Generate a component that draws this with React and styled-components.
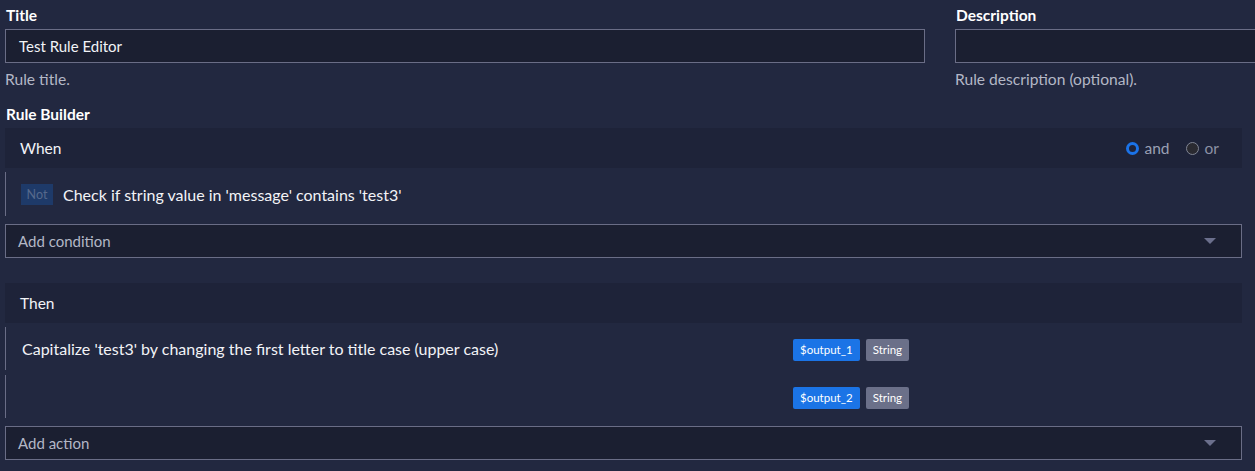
import styled, { createGlobalStyle } from "styled-components";

const GlobalStyle = createGlobalStyle`
  html, body {
    margin: 0;
    padding: 0;
    background: #222840;
    overflow: hidden;
  }
  body {
    font-family: "Lato", "Open Sans", sans-serif;
    color: #e8eaf0;
  }
`;

const Page = styled.div`
  width: 1255px;
  height: 471px;
  padding: 6px 13px 0 5px;
  box-sizing: border-box;
  overflow: hidden;
`;

const TopGrid = styled.div`
  display: grid;
  grid-template-columns: 920px 920px;
  column-gap: 30px;
`;

const Field = styled.div`
  display: flex;
  flex-direction: column;
`;

const Label = styled.div`
  font-size: 15.5px;
  font-weight: 700;
  line-height: 18px;
  margin-bottom: 5px;
  padding-left: 1px;
  color: #ffffff;
`;

const TextInput = styled.div`
  height: 34px;
  box-sizing: border-box;
  border: 1px solid #6a6d86;
  background: #1b1f31;
  padding: 0 13px;
  display: flex;
  align-items: center;
  font-size: 15px;
  color: #f2f3f7;
`;

const Help = styled.div`
  font-size: 15.6px;
  line-height: 18px;
  margin-top: 7px;
  color: #b3b7c6;
`;

const SectionLabel = styled(Label)`
  margin-top: 17px;
  margin-bottom: 5px;
`;

const Header = styled.div`
  height: 40px;
  background: #1e2339;
  display: flex;
  align-items: center;
  justify-content: space-between;
  padding: 0 23px 0 15px;
  font-size: 15.5px;
  color: #f2f3f7;
`;

const RadioGroup = styled.div`
  display: flex;
  align-items: center;
  gap: 16px;
`;

const RadioItem = styled.label`
  display: flex;
  align-items: center;
  gap: 6px;
  font-size: 15.5px;
  color: ${(p) => (p.checked ? "#9aa0b4" : "#8c91a5")};
`;

const RadioDot = styled.span`
  width: 13px;
  height: 13px;
  border-radius: 50%;
  box-sizing: border-box;
  background: ${(p) => (p.checked ? "#1e2339" : "#2a2a31")};
  border: ${(p) => (p.checked ? "3px solid #1b73e8" : "1px solid #808594")};
`;

const Row = styled.div`
  height: ${(p) => p.h}px;
  margin-top: ${(p) => p.gap}px;
  border-left: 1px solid #6a6d86;
  display: flex;
  align-items: center;
  padding-left: ${(p) => p.pad}px;
  font-size: 16px;
  color: #f2f3f7;
`;

const ActionRow = styled(Row)`
  display: grid;
  grid-template-columns: 771px auto;
  align-items: center;
`;

const NotBadge = styled.span`
  display: inline-flex;
  align-items: center;
  justify-content: center;
  width: 32px;
  height: 21px;
  background: #1e3a69;
  color: #56698c;
  font-size: 12.5px;
  margin-right: 10px;
`;

const Badges = styled.div`
  display: flex;
  gap: 6px;
  padding-top: 2px;
`;

const Badge = styled.span`
  height: 22px;
  padding: 0 7px;
  display: inline-flex;
  align-items: center;
  border-radius: 2px;
  font-size: 11.5px;
  color: #ffffff;
  background: ${(p) => (p.kind === "type" ? "#6b7089" : "#1b74e6")};
`;

const Select = styled.div`
  height: 34px;
  margin-top: ${(p) => p.gap}px;
  box-sizing: border-box;
  border: 1px solid #6a6d86;
  background: #1b1f31;
  display: flex;
  align-items: center;
  justify-content: space-between;
  padding: 0 25px 0 12px;
  font-size: 15px;
  color: #b3b7c6;
`;

const Caret = styled.span`
  width: 0;
  height: 0;
  border-left: 6px solid transparent;
  border-right: 6px solid transparent;
  border-top: 6px solid #6b6f8c;
`;

const HeaderGap = styled.div`
  height: 25px;
`;

const Radio = ({ checked, children }) => (
  <RadioItem checked={checked}>
    <RadioDot checked={checked} />
    {children}
  </RadioItem>
);

const actions = [
  {
    text: "Capitalize 'test3' by changing the first letter to title case (upper case)",
    output: "$output_1",
  },
  { text: "", output: "$output_2" },
];

export default function App() {
  return (
    <>
      <GlobalStyle />
      <Page>
        <TopGrid>
          <Field>
            <Label>Title</Label>
            <TextInput>Test Rule Editor</TextInput>
            <Help>Rule title.</Help>
          </Field>
          <Field>
            <Label>Description</Label>
            <TextInput />
            <Help>Rule description (optional).</Help>
          </Field>
        </TopGrid>

        <SectionLabel>Rule Builder</SectionLabel>

        <Header>
          <span>When</span>
          <RadioGroup>
            <Radio checked>and</Radio>
            <Radio>or</Radio>
          </RadioGroup>
        </Header>
        <Row h={44} gap={4} pad={15}>
          <NotBadge>Not</NotBadge>
          Check if string value in 'message' contains 'test3'
        </Row>
        <Select gap={8}>
          Add condition
          <Caret />
        </Select>

        <HeaderGap />

        <Header>
          <span>Then</span>
        </Header>
        {actions.map((a, i) => (
          <ActionRow key={a.output} h={43} gap={i === 0 ? 4 : 5} pad={16}>
            <span>{a.text}</span>
            <Badges>
              <Badge>{a.output}</Badge>
              <Badge kind="type">String</Badge>
            </Badges>
          </ActionRow>
        ))}
        <Select gap={8}>
          Add action
          <Caret />
        </Select>
      </Page>
    </>
  );
}
